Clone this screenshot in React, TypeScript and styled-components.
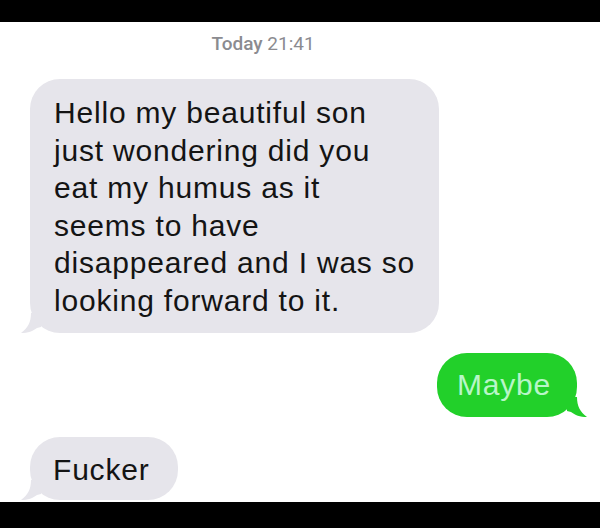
import React from 'react';
import styled, { createGlobalStyle } from 'styled-components';

const Global = createGlobalStyle`
  body {
    margin: 0;
    background: #000000;
  }
`;

const Screen = styled.div`
  width: 600px;
  height: 528px;
  box-sizing: border-box;
  padding: 22px 0 26px;
  background: #000000;
  display: flex;
  flex-direction: column;
  overflow: hidden;
`;

const Thread = styled.div`
  flex: 1;
  background: #ffffff;
  display: flex;
  flex-direction: column;
  padding: 12px 23px 0 30px;
  overflow: hidden;
`;

const Stamp = styled.div`
  font-family: Roboto, 'Liberation Sans', sans-serif;
  font-size: 19px;
  line-height: 20px;
  color: #8b8b90;
  text-align: center;
  padding-right: 81px;
  b {
    font-weight: 500;
  }
`;

const Bubble = styled.div<{ $mine?: boolean; $pad: string }>`
  position: relative;
  align-self: ${(p) => (p.$mine ? 'flex-end' : 'flex-start')};
  background: ${(p) => (p.$mine ? '#22d02a' : '#e6e5eb')};
  color: ${(p) => (p.$mine ? '#b8f6c8' : '#141414')};
  font-family: 'Liberation Sans', Arial, sans-serif;
  font-size: 30px;
  line-height: 37.5px;
  letter-spacing: 0.8px;
  white-space: pre-line;
  border-radius: 30px;
  padding: ${(p) => p.$pad};
`;

const Tail = styled.svg<{ $mine?: boolean }>`
  position: absolute;
  bottom: 0;
  width: 20px;
  height: 20px;
  ${(p) => (p.$mine ? 'right: -10px; transform: scaleX(-1);' : 'left: -9px;')}
`;

const Spacer = styled.div<{ $h: number }>`
  height: ${(p) => p.$h}px;
  flex-shrink: 0;
`;

const BubbleTail = ({ mine, color }: { mine?: boolean; color: string }) => (
  <Tail $mine={mine} viewBox='0 0 20 20'>
    <path d='M10 0 C10 9 7 15 0 20 C7 20 12 18 16 15 L20 14 L20 0 Z' fill={color} />
  </Tail>
);

export default function App() {
  return (
    <>
      <Global />
      <Screen>
        <Thread>
          <Stamp>
            <b>Today</b> 21:41
          </Stamp>
          <Spacer $h={25} />
          <Bubble $pad='15px 24px 14px 24px'>
            {'Hello my beautiful son\njust wondering did you\neat my humus as it\nseems to have\ndisappeared and I was so\nlooking forward to it.'}
            <BubbleTail color='#e6e5eb' />
          </Bubble>
          <Spacer $h={20} />
          <Bubble $mine $pad='13px 26px 13px 20px'>
            Maybe
            <BubbleTail mine color='#22d02a' />
          </Bubble>
          <Spacer $h={20} />
          <Bubble $pad='14px 28px 12px 23px'>
            Fucker
            <BubbleTail color='#e6e5eb' />
          </Bubble>
        </Thread>
      </Screen>
    </>
  );
}
